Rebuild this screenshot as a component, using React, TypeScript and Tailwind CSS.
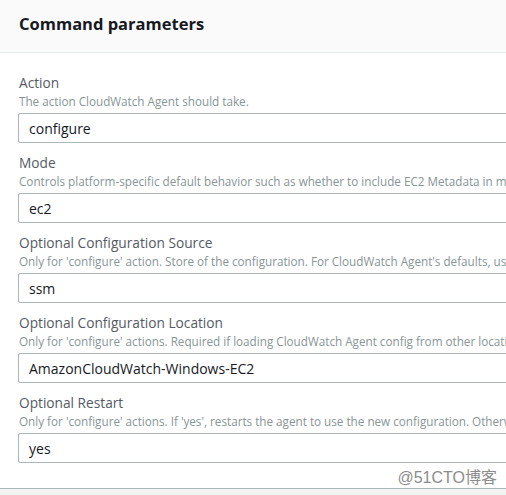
const fields = [
  {
    label: "Action",
    desc: "The action CloudWatch Agent should take.",
    value: "configure",
  },
  {
    label: "Mode",
    desc: "Controls platform-specific default behavior such as whether to include EC2 Metadata in metrics.",
    value: "ec2",
  },
  {
    label: "Optional Configuration Source",
    desc: "Only for 'configure' action. Store of the configuration. For CloudWatch Agent's defaults, use 'default'.",
    value: "ssm",
  },
  {
    label: "Optional Configuration Location",
    desc: "Only for 'configure' actions. Required if loading CloudWatch Agent config from other locations except 'default'.",
    value: "AmazonCloudWatch-Windows-EC2",
  },
  {
    label: "Optional Restart",
    desc: "Only for 'configure' actions. If 'yes', restarts the agent to use the new configuration. Otherwise, the new config will only apply on the next restart.",
    value: "yes",
  },
];

const App = () => {
  return (
    <div className="w-[506px] h-[495px] overflow-hidden bg-[#f2f3f3] font-['Open_Sans',sans-serif]">
      <div className="bg-white border-b border-[#aab7b8]">
        <div className="h-[53px] bg-[#fafafa] border-b border-[#eaeded] pl-[19px] pt-[12px]">
          <h2 className="text-[16.5px] leading-[24px] font-bold text-[#16191f]">Command parameters</h2>
        </div>
        <div className="pl-[18px] pt-[20px] flex flex-col gap-[10px]">
          {fields.map((f) => (
            <div key={f.label} className="flex flex-col">
              <label className="pl-[1px] text-[13.7px] leading-[20px] text-[#545b64] whitespace-nowrap">
                {f.label}
              </label>
              <p className="pl-[1px] text-[11.7px] leading-[16px] text-[#879596] whitespace-nowrap overflow-hidden">
                {f.desc}
              </p>
              <div className="mt-[4px] w-[600px] h-[30px] border border-[#aab7b8] rounded-[2px] pl-[10px] flex items-center text-[14px] text-[#16191f] whitespace-nowrap">
                {f.value}
              </div>
            </div>
          ))}
          <div className="h-[25px] flex items-center justify-end pr-[9px] -mt-[10px] pt-[4px] text-[16px] text-[#8c8c8c] font-['Liberation_Sans','Noto_Sans_CJK_SC',sans-serif]">
            @51CTO博客
          </div>
        </div>
      </div>
    </div>
  );
};

export default App;
